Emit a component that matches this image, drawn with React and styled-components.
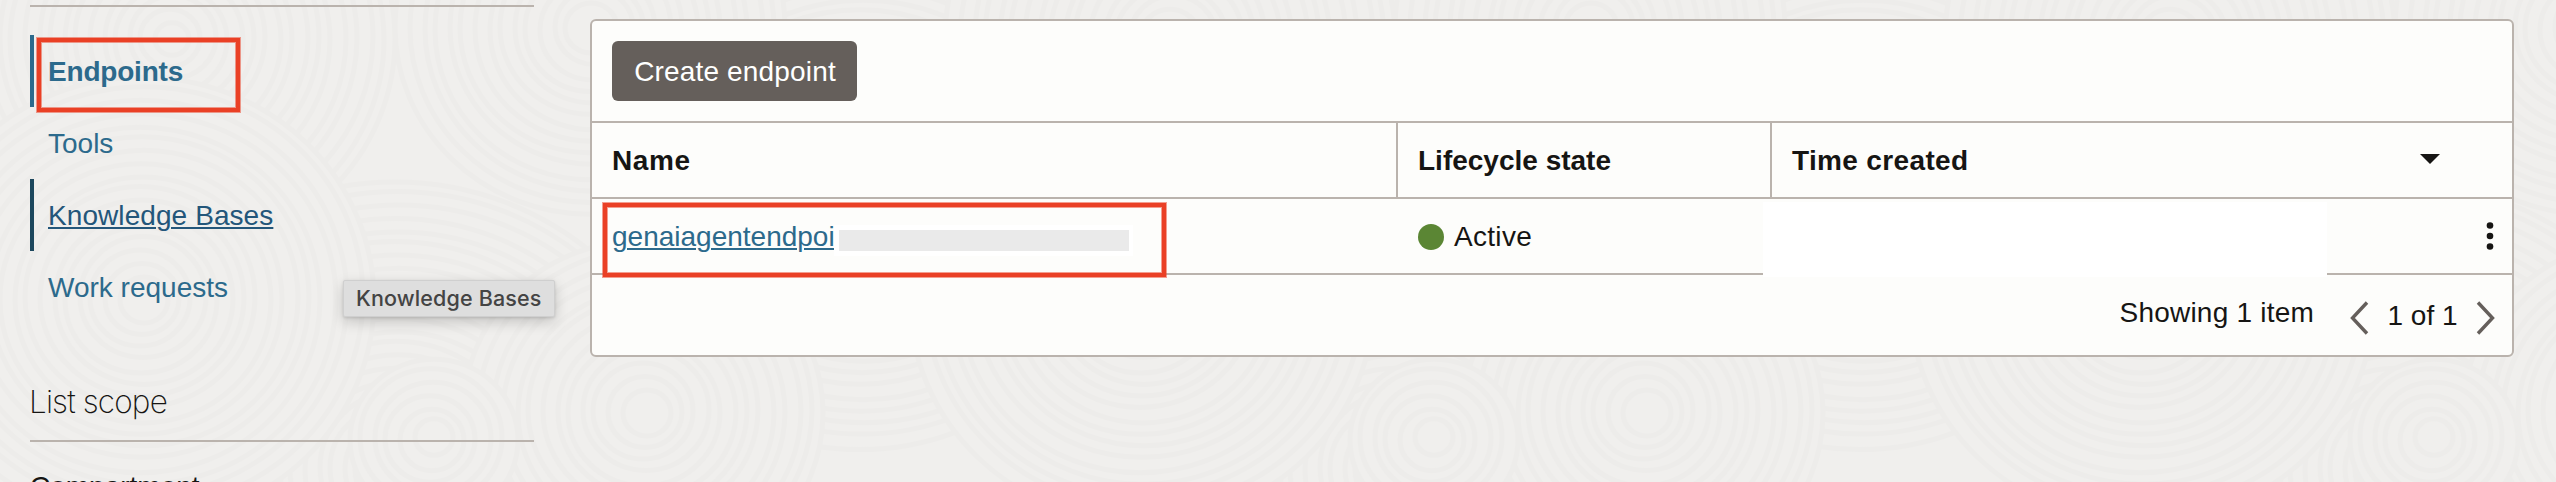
import React from "react";
import styled, { createGlobalStyle } from "styled-components";

const line = "#bab3ad";
const ink = "#161513";
const sans = '"Liberation Sans", Arial, sans-serif';

const GlobalStyle = createGlobalStyle`
  * { box-sizing: border-box; }
  body {
    margin: 0;
    background: #f0efed;
    color: ${ink};
    font-family: ${sans};
    font-size: 28px;
  }
`;

const Page = styled.div`
  position: relative;
  display: flex;
  align-items: flex-start;
  width: 2556px;
  height: 482px;
  overflow: hidden;
`;

const Texture = styled.svg`
  position: absolute;
  inset: 0;
`;

const Sidebar = styled.aside`
  position: relative;
  flex: none;
  width: 504px;
  margin-left: 30px;
  padding-top: 5px;
`;

const Divider = styled.div`
  height: 2px;
  background: ${line};
`;

const Nav = styled.nav`
  display: flex;
  flex-direction: column;
  padding-top: 28px;
`;

const NavItem = styled.a`
  height: 72px;
  line-height: 74px;
  padding-left: 14px;
  border-left: 4px solid ${(p) => (p.$current ? "#2c6a8c" : p.$hover ? "#1c475d" : "transparent")};
  color: ${(p) => (p.$hover ? "#23567a" : "#2c6a8c")};
  font-weight: ${(p) => (p.$current ? 700 : 400)};
  letter-spacing: ${(p) => p.$track || 0}px;
  text-decoration: ${(p) => (p.$hover ? "underline 2px" : "none")};
  text-underline-offset: 2px;
`;

const SectionTitle = styled.h2`
  margin: 59px 0 0 -1px;
  height: 58px;
  line-height: 40px;
  font-family: Inter, sans-serif;
  font-weight: 200;
  font-size: 31.5px;
  letter-spacing: -0.85px;
`;

const FieldLabel = styled.div`
  margin-top: 29px;
  line-height: 32px;
`;

const Tooltip = styled.div`
  position: absolute;
  left: 343px;
  top: 280px;
  width: 212px;
  height: 37px;
  padding-left: 12px;
  border: 1px solid #cfcfcf;
  border-radius: 2px;
  background: #dedede;
  box-shadow: 0 5px 14px rgba(0, 0, 0, 0.18), 0 1px 3px rgba(0, 0, 0, 0.12);
  color: #444;
  font: 450 21.5px/35px Inter, sans-serif;
  letter-spacing: 0.15px;
  white-space: nowrap;
`;

const Panel = styled.main`
  position: relative;
  flex: none;
  width: 1924px;
  height: 338px;
  margin: 19px 0 0 56px;
  border: 2px solid ${line};
  border-radius: 6px;
  background: #fdfdfb;
`;

const Toolbar = styled.div`
  display: flex;
  align-items: center;
  height: 100px;
  padding-left: 20px;
`;

const Button = styled.button`
  width: 245px;
  height: 60px;
  padding: 2px 0 0 1px;
  border: 0;
  border-radius: 6px;
  background: #655f5b;
  color: #fff;
  font: 28px ${sans};
  letter-spacing: 0.16px;
`;

const Row = styled.div`
  display: grid;
  grid-template-columns: 804px 374px 1fr;
  height: 76px;
  border-top: 2px solid ${line};
`;

const Cell = styled.div`
  display: flex;
  align-items: center;
  padding-left: 20px;
  padding-top: 2px;
  letter-spacing: ${(p) => p.$track || 0}px;
`;

const HeadCell = styled(Cell)`
  font-weight: 700;
  border-left: ${(p) => (p.$first ? "0" : `2px solid ${line}`)};
`;

const Caret = styled.svg`
  margin: -4px 72px 0 auto;
`;

const EndpointLink = styled.a`
  width: 222px;
  overflow: hidden;
  color: #2c6a8c;
  line-height: 40px;
  letter-spacing: 0;
  text-decoration: underline 2px;
  text-underline-offset: 2px;
  white-space: nowrap;
`;

const Redacted = styled.span`
  width: 299px;
  height: 31px;
  margin-top: 6px;
  border: 5px solid #fff;
  border-right-width: 4px;
  background: #eaeaea;
`;

const StatusDot = styled.span`
  width: 26px;
  height: 26px;
  margin: 0 10px 0 2px;
  border-radius: 50%;
  background: #5b8634;
`;

const BlankPatch = styled.span`
  align-self: flex-start;
  width: 564px;
  height: 75px;
  margin: 1px 0 -4px -27px;
  background: #fff;
  z-index: 1;
`;

const Kebab = styled.svg`
  margin: -2px 16px 0 auto;
`;

const Footer = styled.div`
  display: flex;
  justify-content: flex-end;
  height: 82px;
  padding-right: 17px;
  border-top: 2px solid ${line};
`;

const Count = styled.span`
  margin: 22px 36px 0 0;
  line-height: 32px;
  letter-spacing: 0.22px;
`;

const PageLabel = styled.span`
  margin-top: 25px;
  width: 107px;
  text-align: center;
  line-height: 32px;
`;

const Chevron = styled.svg`
  margin-top: 26px;
`;

const Highlight = styled.div`
  position: absolute;
  left: ${(p) => p.$x}px;
  top: ${(p) => p.$y}px;
  width: ${(p) => p.$w}px;
  height: ${(p) => p.$h}px;
  border: 4px solid #ea4025;
  box-shadow: 0 0 0 1px rgba(234, 64, 37, 0.5), inset 0 0 0 1px rgba(234, 64, 37, 0.5);
`;

const clusters = [
  [395, 470, 300],
  [860, 200, 260],
  [170, 40, 225],
  [590, 30, 195],
  [643, 413, 180],
  [140, 300, 232],
  [430, 440, 84],
];

function rings(radius) {
  const list = [];
  for (let r = radius; r > 16; r -= 13) list.push(r);
  return list;
}

function Grain() {
  return (
    <Texture width="2556" height="482" viewBox="0 0 2556 482">
      {[-1000, 0, 1000, 2000].map((dx) => (
        <g key={dx} transform={`translate(${dx} 0)`} fill="#f0efed" stroke="#edecea" strokeWidth="5">
          {clusters.map(([x, y, radius]) =>
            rings(radius).map((r) => (
              <ellipse key={`${x}-${r}`} cx={x + (r % 5)} cy={y - (r % 4)} rx={r} ry={r * 0.96} />
            ))
          )}
        </g>
      ))}
    </Texture>
  );
}

export default function App() {
  return (
    <>
      <GlobalStyle />
      <Page>
        <Grain />
        <Sidebar>
          <Divider />
          <Nav>
            <NavItem $current $track={-0.2}>Endpoints</NavItem>
            <NavItem>Tools</NavItem>
            <NavItem $hover $track={0.08}>Knowledge Bases</NavItem>
            <NavItem>Work requests</NavItem>
          </Nav>
          <SectionTitle>List scope</SectionTitle>
          <Divider />
          <FieldLabel>Compartment</FieldLabel>
        </Sidebar>
        <Panel>
          <Toolbar>
            <Button>Create endpoint</Button>
          </Toolbar>
          <Row>
            <HeadCell $first $track={0.6}>Name</HeadCell>
            <HeadCell>Lifecycle state</HeadCell>
            <HeadCell $track={0.35}>
              Time created
              <Caret width="20" height="10" viewBox="0 0 20 10">
                <path d="M0 0H20L10 10Z" fill={ink} />
              </Caret>
            </HeadCell>
          </Row>
          <Row>
            <Cell>
              <EndpointLink>genaiagentendpoi</EndpointLink>
              <Redacted />
            </Cell>
            <Cell $track={0.3}>
              <StatusDot />
              Active
            </Cell>
            <Cell>
              <BlankPatch />
              <Kebab width="12" height="32" viewBox="0 0 12 32" fill={ink}>
                <circle cx="6" cy="5.5" r="3.3" />
                <circle cx="6" cy="16" r="3.3" />
                <circle cx="6" cy="26.5" r="3.3" />
              </Kebab>
            </Cell>
          </Row>
          <Footer>
            <Count>Showing 1 item</Count>
            <Chevron width="19" height="34" viewBox="0 0 19 34" fill="none" stroke="#655f5b" strokeWidth="3.4">
              <path d="M17 1.5L2.5 17L17 32.5" />
            </Chevron>
            <PageLabel>1 of 1</PageLabel>
            <Chevron width="19" height="34" viewBox="0 0 19 34" fill="none" stroke="#655f5b" strokeWidth="3.4">
              <path d="M2 1.5L16.5 17L2 32.5" />
            </Chevron>
          </Footer>
        </Panel>
        <Tooltip>Knowledge Bases</Tooltip>
        <Highlight $x={37} $y={38} $w={203} $h={74} />
        <Highlight $x={603} $y={203} $w={563} $h={74} />
      </Page>
    </>
  );
}
